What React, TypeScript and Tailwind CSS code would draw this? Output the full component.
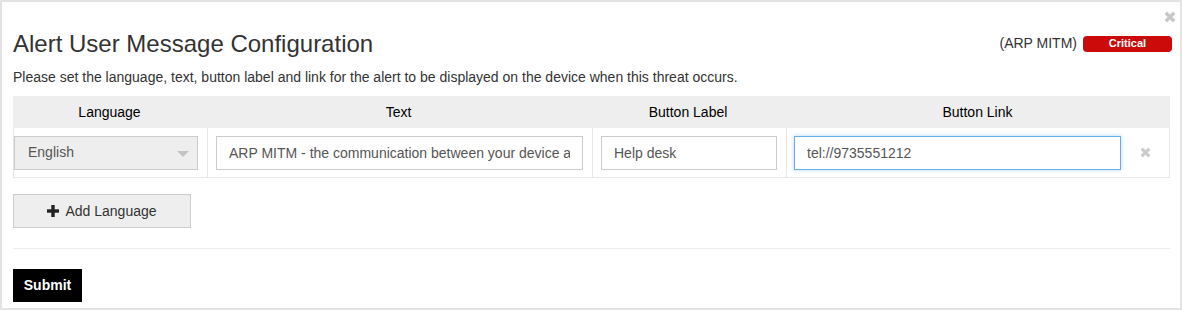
const font = { fontFamily: '"Liberation Sans", Arial, sans-serif' };

function CloseX({ className }: { className?: string }) {
    return (
        <svg viewBox="0 0 10 10" className={className} fill="none">
            <path d="M1.5 1.5 L8.5 8.5 M8.5 1.5 L1.5 8.5" stroke="currentColor" strokeWidth="2.8" />
        </svg>
    );
}

function PlusIcon() {
    return (
        <svg viewBox="0 0 12 12" className="h-[12px] w-[12px] text-[#222]" fill="currentColor">
            <rect x="4.3" y="0" width="3.4" height="12" />
            <rect x="0" y="4.3" width="12" height="3.4" />
        </svg>
    );
}

export default function App() {
    return (
        <div className="w-[1182px] h-[310px] bg-[#e3e3e3] pl-[2px] pt-[2px] pr-[2px] pb-[2px]" style={font}>
            <div className="relative h-[306px] w-[1178px] bg-white pl-[11px] pr-[8px] text-[14px] text-[#333]">
                <CloseX className="absolute right-[4px] top-[9px] h-[12px] w-[12px] text-[#c8c8c8]" />

                <div className="flex items-end justify-between pt-[28px]">
                    <h1 className="text-[24px] leading-[28px] text-[#333]">Alert User Message Configuration</h1>
                    <div className="mb-[4px] flex items-center gap-[6px]">
                        <span className="text-[14px] text-[#333]">(ARP MITM)</span>
                        <span className="flex h-[16px] w-[89px] items-center justify-center rounded-[4px] bg-[#cc0a0a] text-[11px] font-bold text-white">
                            Critical
                        </span>
                    </div>
                </div>

                <p className="mt-[9px] text-[14px] leading-[20px] text-[#333]">
                    Please set the language, text, button label and link for the alert to be displayed on the device when this threat occurs.
                </p>

                <div className="mt-[9px] w-[1157px]">
                    <div className="grid h-[32px] grid-cols-[193px_385px_194px_385px] items-center bg-[#eeeeee] text-[14px] text-black">
                        <div className="text-center">Language</div>
                        <div className="text-center">Text</div>
                        <div className="text-center">Button Label</div>
                        <div className="text-center">Button Link</div>
                    </div>
                    <div className="grid h-[50px] grid-cols-[193px_385px_194px_343px_42px] border-x border-b border-[#e6e6e6]">
                        <div className="flex items-center pr-[8px]">
                            <div className="relative flex h-[34px] w-[184px] items-center border border-[#cccccc] bg-[#eeeeee] pl-[13px] text-[#555]">
                                English
                                <span className="absolute right-[8px] top-[14px] h-0 w-0 border-x-[6px] border-t-[6px] border-x-transparent border-t-[#c4c4c4]" />
                            </div>
                        </div>
                        <div className="flex items-center border-l border-[#e6e6e6] pl-[8px] pr-[8px]">
                            <input
                                readOnly
                                value="ARP MITM - the communication between your device and the network may be intercepted"
                                className="h-[34px] w-[367px] border border-[#cccccc] bg-white px-[12px] text-[14px] text-[#555] outline-none"
                            />
                        </div>
                        <div className="flex items-center border-l border-[#e6e6e6] pl-[8px]">
                            <input
                                readOnly
                                value="Help desk"
                                className="h-[34px] w-[176px] border border-[#cccccc] bg-white px-[12px] text-[14px] text-[#555] outline-none"
                            />
                        </div>
                        <div className="flex items-center border-l border-[#e6e6e6] pl-[7px]">
                            <input
                                readOnly
                                value="tel://9735551212"
                                className="h-[34px] w-[327px] border border-[#66afe9] bg-white px-[12px] text-[14px] text-[#555] shadow-[0_0_4px_rgba(102,175,233,0.5)] outline-none"
                            />
                        </div>
                        <div className="flex items-center pl-[11px]">
                            <CloseX className="h-[11px] w-[11px] text-[#cccccc]" />
                        </div>
                    </div>
                </div>

                <button className="mt-[16px] flex h-[34px] w-[178px] items-center justify-center gap-[6px] border border-[#cccccc] bg-[#eeeeee] text-[14px] text-[#333]">
                    <PlusIcon />
                    Add Language
                </button>

                <div className="mt-[20px] w-[1157px] border-t border-[#eeeeee]" />

                <button className="mt-[20px] flex h-[33px] w-[69px] items-center justify-center bg-black text-[14px] font-bold text-white">
                    Submit
                </button>
            </div>
        </div>
    );
}
